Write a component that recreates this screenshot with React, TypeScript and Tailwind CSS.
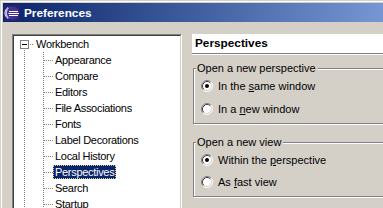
import React from "react";

function Radio({ checked }: { checked?: boolean }) {
  return (
    <svg width="12" height="12" viewBox="0 0 12 12" className="shrink-0">
      <circle cx="6" cy="6" r="5" fill="#ffffff" />
      <path d="M2.11 9.89 A5.5 5.5 0 0 1 9.89 2.11" stroke="#808080" fill="none" />
      <path d="M9.89 2.11 A5.5 5.5 0 0 1 2.11 9.89" stroke="#ffffff" fill="none" />
      <path d="M2.82 9.18 A4.5 4.5 0 0 1 9.18 2.82" stroke="#404040" fill="none" />
      <path d="M9.18 2.82 A4.5 4.5 0 0 1 2.82 9.18" stroke="#d4d0c8" fill="none" />
      {checked && <circle cx="6" cy="6" r="2" fill="#000000" />}
    </svg>
  );
}

function RadioRow({
  checked,
  pre,
  key1,
  post,
  className,
}: {
  checked?: boolean;
  pre: string;
  key1: string;
  post: string;
  className?: string;
}) {
  return (
    <div className={"flex items-center h-[16px] gap-[5px] " + (className || "")}>
      <Radio checked={checked} />
      <span className="leading-[13px] whitespace-nowrap">
        {pre}
        <span className="underline">{key1}</span>
        {post}
      </span>
    </div>
  );
}

function ChildCell({ last }: { last?: boolean }) {
  return (
    <svg width="39" height="16" className="shrink-0" shapeRendering="crispEdges">
      <line x1="10.5" y1="0" x2="10.5" y2="16" stroke="#808080" strokeDasharray="1 1" />
      <line x1="29.5" y1="0" x2="29.5" y2={last ? 9 : 16} stroke="#808080" strokeDasharray="1 1" />
      <line x1="30" y1="8.5" x2="39" y2="8.5" stroke="#808080" strokeDasharray="1 1" />
    </svg>
  );
}

function RootCell() {
  return (
    <svg width="20" height="16" className="shrink-0" shapeRendering="crispEdges">
      <rect x="6.5" y="4.5" width="8" height="8" fill="#ffffff" stroke="#808080" />
      <line x1="8" y1="8.5" x2="13" y2="8.5" stroke="#000000" />
      <line x1="10.5" y1="14" x2="10.5" y2="16" stroke="#808080" strokeDasharray="1 1" />
      <line x1="16" y1="8.5" x2="20" y2="8.5" stroke="#808080" strokeDasharray="1 1" />
    </svg>
  );
}

const children = [
  "Appearance",
  "Compare",
  "Editors",
  "File Associations",
  "Fonts",
  "Label Decorations",
  "Local History",
  "Perspectives",
  "Search",
  "Startup",
];

export default function App() {
  return (
    <div className="w-[383px] h-[208px] overflow-hidden bg-[#d4d0c8] font-['Liberation_Sans',Arial,sans-serif] text-[11px] text-black">
      <div className="pt-[1px] pl-[1px] h-full">
        <div className="border-t border-l border-white h-full pt-[1px] pl-[1px]">
          {/* title bar */}
          <div className="h-[19px] w-[420px] flex items-center bg-[linear-gradient(to_right,#0a246a,#7597d3_380px,#a6caf0)]">
            <svg width="16" height="16" viewBox="0 0 16 16" className="ml-[1px] shrink-0">
              <rect x="0" y="0" width="16" height="16" fill="#2a2470" />
              <circle cx="8.5" cy="8" r="6.5" fill="#3e3592" />
              <path d="M6 2.2 A6 6 0 0 0 6 13.8 A7 7 0 0 1 6 2.2 Z" fill="#c9c3f0" />
              <path d="M4 2.5 A6.5 6.5 0 0 0 4 13.5" stroke="#e8e4ff" strokeWidth="1" fill="none" />
              <line x1="5" y1="6.5" x2="14" y2="6.5" stroke="#ffffff" strokeWidth="1" />
              <line x1="4.5" y1="8.5" x2="15" y2="8.5" stroke="#ffffff" strokeWidth="1" />
              <line x1="5" y1="10.5" x2="14" y2="10.5" stroke="#ffffff" strokeWidth="1" />
            </svg>
            <span className="ml-[4px] text-white font-bold text-[11.8px] leading-[14px] whitespace-nowrap">
              Preferences
            </span>
          </div>

          {/* body */}
          <div className="flex items-start mt-[12px] ml-[9px]">
            {/* tree */}
            <div className="w-[170px] h-[200px] shrink-0 border-t border-l border-[#808080] border-r border-b border-r-white border-b-white">
              <div className="h-full bg-white border-t border-l border-[#404040] border-r border-b border-r-[#d4d0c8] border-b-[#d4d0c8] tracking-[-0.3px]">
                <div className="flex items-center h-[16px]">
                  <RootCell />
                  <span className="px-[2px] h-[14px] leading-[14px] whitespace-nowrap">Workbench</span>
                </div>
                {children.map((c) => (
                  <div key={c} className="flex items-center h-[16px]">
                    <ChildCell />
                    {c === "Perspectives" ? (
                      <span className="px-[2px] h-[14px] leading-[14px] whitespace-nowrap bg-[#0a246a] text-white outline-1 outline-dotted outline-[#d8d080] -outline-offset-1">
                        {c}
                      </span>
                    ) : (
                      <span className="px-[2px] h-[14px] leading-[14px] whitespace-nowrap">{c}</span>
                    )}
                  </div>
                ))}
              </div>
            </div>

            {/* right panel */}
            <div className="ml-[10px] w-[200px] shrink-0">
              <div className="h-[19px] bg-white flex items-center pl-[3px] font-bold text-[11.8px] whitespace-nowrap">
                Perspectives
              </div>
              <div className="h-[1px] bg-[#808080]" />
              <div className="h-[1px] bg-white" />

              <div className="relative mt-[13px] ml-[1px] border border-[#808080] shadow-[inset_1px_1px_0_#ffffff,1px_1px_0_#ffffff] pt-[9px] pb-[6px] pl-[7px]">
                <span className="absolute left-[2px] -top-[7px] pl-[1px] pr-[2px] bg-[#d4d0c8] leading-[13px] whitespace-nowrap">
                  Open a new perspective
                </span>
                <RadioRow checked pre="In the " key1="s" post="ame window" />
                <RadioRow pre="In a " key1="n" post="ew window" className="mt-[7px]" />
              </div>

              <div className="relative mt-[18px] ml-[1px] border border-[#808080] shadow-[inset_1px_1px_0_#ffffff,1px_1px_0_#ffffff] pt-[9px] pb-[6px] pl-[7px]">
                <span className="absolute left-[2px] -top-[7px] pl-[1px] pr-[2px] bg-[#d4d0c8] leading-[13px] whitespace-nowrap">
                  Open a new view
                </span>
                <RadioRow checked pre="Within the " key1="p" post="erspective" />
                <RadioRow pre="As " key1="f" post="ast view" className="mt-[6px]" />
              </div>
            </div>
          </div>
        </div>
      </div>
    </div>
  );
}
